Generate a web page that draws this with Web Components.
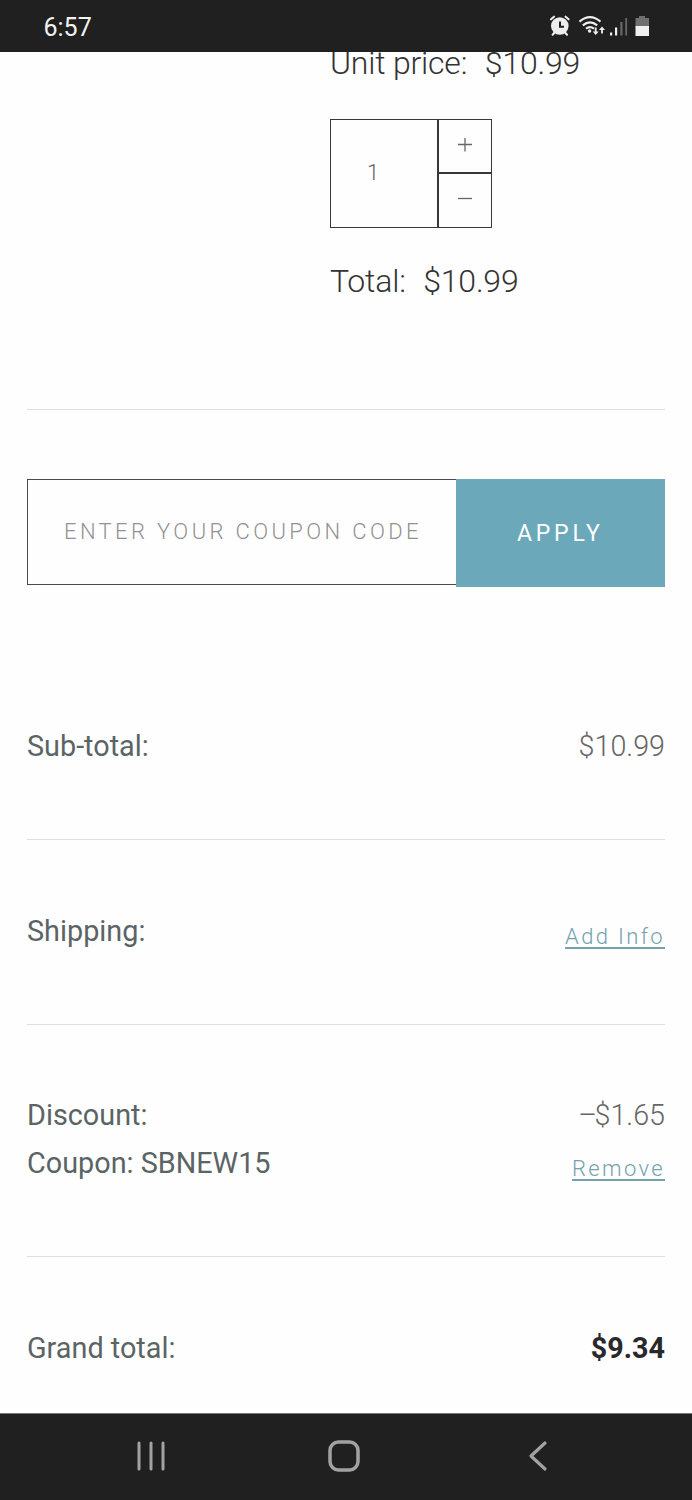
<!DOCTYPE html>
<html lang="en">
<head>
<meta charset="utf-8">
<title>Cart</title>
<style>
html,body{margin:0;background:#fefefe;font-family:Roboto,"Liberation Sans",sans-serif;font-weight:300}
body{width:692px;height:1500px;overflow:hidden}
</style>
</head>
<body>
<cart-screen></cart-screen>
<script>
const define = (name, html) => customElements.define(name, class extends HTMLElement {
  constructor() {
    super();
    this.attachShadow({ mode: 'open' }).innerHTML = html;
  }
});

define('status-bar', `
<style>
:host{display:flex;justify-content:space-between;align-items:center;box-sizing:border-box;height:52px;padding:0 42px 0 43.500px;background:#202020;color:#f2f2f2;position:relative;z-index:1}
.time{font-size:25px;font-weight:400;line-height:50px;padding-top:4px}
svg{display:block}
</style>
<span class="time">6:57</span>
<svg width="101" height="22" viewBox="549 15 101 22" fill="none" stroke="#eee" stroke-linecap="round">
  <circle cx="559.8" cy="26" r="8.8" fill="#eee" stroke="none"/>
  <path d="M551 19.3l3-2.6M568.6 19.3l-3-2.6M552.6 34.7l2-2.2M567 34.7l-2-2.2" stroke-width="2.1"/>
  <path d="M560 21.5v5.3h4" stroke="#202020" stroke-width="2" stroke-linecap="butt"/>
  <g stroke-width="2.1" stroke-linecap="butt"><path d="M579.5 21.6q10.500-9 21 0"/><path d="M582.8 25.400q7.200-6.200 14.400 0"/><path d="M586 28.600q4-3 8 0"/></g>
  <circle cx="589.6" cy="31" r="1.700" fill="#eee" stroke="none"/>
  <g fill="#eee" stroke="none"><path d="M594.800 27.500h1.800v4h2.100l-3 3.500-3-3.500h2.100zM601.100 33.500h1.800v-3.500h2.100l-3-3.500-3 3.500h2.100z"/>
  <path d="M610 32.500h2.200v3H610zM615 27.500h2.200v8H615z"/></g>
  <path d="M620.300 22h2.200v13.500h-2.200zM625.300 18h1.800v17.500h-1.800z" fill="#686868" stroke="none"/>
  <path d="M639 16h6v2h4v8.500h-13.500V18h3.500z" fill="#707070" stroke="none"/>
  <path d="M635.500 26h13.500v10h-13.500z" fill="#f0f0f0" stroke="none"/>
</svg>`);

define('price-line', `
<style>
:host{display:flex;gap:17.600px;font-size:32px;letter-spacing:-.2px;line-height:38px;color:#333;white-space:nowrap}
</style><slot name="label"></slot><slot></slot>`);

define('quantity-picker', `
<style>
:host{display:grid;grid-template:54px 55px / 108px 54px;width:162px;height:109px;box-sizing:border-box;color:#666}
div{box-sizing:border-box;border:1px solid #353939;display:flex;align-items:center;justify-content:center}
.value{grid-row:1/3;font-size:22px;padding:0 22px 2px 0}
svg{display:block}
</style>
<div class="value"><slot></slot></div>
<div><svg width="16" height="16" viewBox="0 0 16 16" stroke="#666" stroke-width="1.300"><path d="M1 6.500h14M8-.5v14"/></svg></div>
<div><svg width="16" height="16" viewBox="0 0 16 16" stroke="#666" stroke-width="1.300"><path d="M1 5.500h14"/></svg></div>`);

define('coupon-form', `
<style>
:host{display:flex;align-items:flex-start;height:108px}
.field{box-sizing:border-box;width:429px;height:106px;border:1px solid #4b4b4e;border-right:0;padding-left:36px;font-size:22px;line-height:103px;letter-spacing:3.380px;color:#929292;white-space:nowrap}
.apply{width:209px;height:108px;background:#6ba9ba;color:#fff;font-size:23px;font-weight:400;line-height:110px;letter-spacing:3.800px;text-indent:61px}
</style>
<div class="field"><slot name="hint"></slot></div><div class="apply"><slot></slot></div>`);

define('summary-row', `
<style>
:host{display:grid;grid-template-columns:1fr auto;align-items:start;box-sizing:border-box;padding:67.500px 0 68.800px;border-bottom:1px solid #dedede;font-size:28.700px;line-height:47.500px}
:host([last]){border-bottom:0}
.l{color:#5b6465;font-weight:400;font-size:28.800px}
.r{color:#666;text-align:right;display:flex;flex-direction:column;align-items:flex-end}
</style>
<div class="l"><slot name="label"></slot></div><div class="r"><slot></slot></div>`);

define('text-link', `
<style>
:host{display:block;font-size:22px;height:47.500px;line-height:57px;letter-spacing:2.350px;color:#72a3ad}
span{text-decoration:underline;text-decoration-thickness:2px;text-underline-offset:3px}
</style><span><slot></slot></span>`);

define('nav-bar', `
<style>
:host{display:flex;justify-content:space-between;align-items:center;box-sizing:border-box;height:87px;padding:0 144px 2px 135px;background:#202020;border-top:1px solid #777;position:relative;z-index:1}
.home{margin-right:7px}
svg{display:block}
</style>
<svg width="32" height="34" viewBox="0 0 32 34" stroke="#a2a2a2" stroke-width="3" stroke-linecap="round"><path d="M4 4v26M16 4v26M28 4v26"/></svg>
<svg class="home" width="34" height="34" viewBox="0 0 34 34" fill="none" stroke="#a2a2a2" stroke-width="3.500"><rect x="3" y="3" width="28" height="28" rx="8.500"/></svg>
<svg width="20" height="34" viewBox="0 0 20 34" fill="none" stroke="#a2a2a2" stroke-width="3.200" stroke-linecap="round" stroke-linejoin="round"><path d="M17 4L3 17l14 13"/></svg>`);

define('cart-screen', `
<style>
:host{display:flex;flex-direction:column;height:1500px;width:692px}
main{flex:1;min-height:0;overflow:hidden;padding:0 27px}
.item{margin-left:303px;margin-top:-8px}
quantity-picker{margin:37px 0 34px}
hr{border:0;height:1px;background:#dedede;margin:109px 0 69px}
.summary{margin-top:68.300px}
.minus{letter-spacing:-2.500px}
strong{font-weight:700;color:#29292c}
</style>
<status-bar></status-bar>
<main>
  <section class="item">
    <price-line><span slot="label">Unit price:</span><span>$10.99</span></price-line>
    <quantity-picker>1</quantity-picker>
    <price-line><span slot="label">Total:</span><span>$10.99</span></price-line>
  </section>
  <hr>
  <coupon-form><span slot="hint">ENTER YOUR COUPON CODE</span>APPLY</coupon-form>
  <section class="summary">
    <summary-row><span slot="label">Sub-total:</span><span>$10.99</span></summary-row>
    <summary-row><span slot="label">Shipping:</span><text-link>Add Info</text-link></summary-row>
    <summary-row><span slot="label">Discount:<br>Coupon: SBNEW15</span><span><span class="minus">–</span>$1.65</span><text-link>Remove</text-link></summary-row>
    <summary-row last><span slot="label">Grand total:</span><strong>$9.34</strong></summary-row>
  </section>
</main>
<nav-bar></nav-bar>`);
</script>
</body>
</html>
